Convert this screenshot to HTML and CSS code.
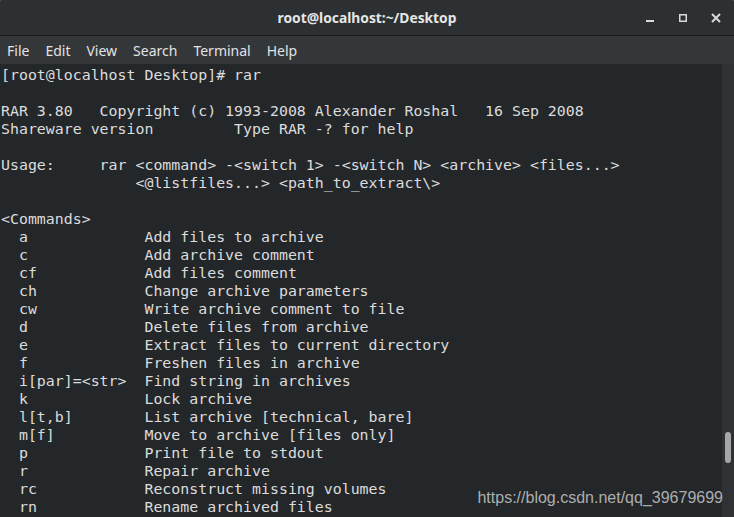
FILE: index.html
```html
<!DOCTYPE html>
<html lang="en">
<head>
    <meta charset="UTF-8">
    <meta name="viewport" content="width=device-width, initial-scale=1.0">
    <title>root@localhost:~/Desktop</title>
    <link rel="stylesheet" href="styles.css">
</head>
<body>
    <div class="window">
        <div class="title-bar">
            <div></div>
            <div class="title">root@localhost:~/Desktop</div>
            <div class="controls">
                <svg class="ctl" width="12" height="12" viewBox="0 0 12 12"><rect x="2" y="8" width="8" height="2" fill="#dadada"/></svg>
                <svg class="ctl" width="12" height="12" viewBox="0 0 12 12"><rect x="2.75" y="2.75" width="6.5" height="6.5" fill="none" stroke="#dadada" stroke-width="1.5"/></svg>
                <svg class="ctl" width="12" height="12" viewBox="0 0 12 12"><path d="M2 2 L10 10 M10 2 L2 10" stroke="#dadada" stroke-width="2"/></svg>
            </div>
        </div>
        <div class="menu-bar">
            <span class="menu-item">File</span>
            <span class="menu-item">Edit</span>
            <span class="menu-item">View</span>
            <span class="menu-item">Search</span>
            <span class="menu-item">Terminal</span>
            <span class="menu-item">Help</span>
        </div>
        <div class="terminal">
<pre class="output">[root@localhost Desktop]# rar

RAR 3.80   Copyright (c) 1993-2008 Alexander Roshal   16 Sep 2008
Shareware version         Type RAR -? for help

Usage:     rar &lt;command&gt; -&lt;switch 1&gt; -&lt;switch N&gt; &lt;archive&gt; &lt;files...&gt;
               &lt;@listfiles...&gt; &lt;path_to_extract\&gt;

&lt;Commands&gt;
  a             Add files to archive
  c             Add archive comment
  cf            Add files comment
  ch            Change archive parameters
  cw            Write archive comment to file
  d             Delete files from archive
  e             Extract files to current directory
  f             Freshen files in archive
  i[par]=&lt;str&gt;  Find string in archives
  k             Lock archive
  l[t,b]        List archive [technical, bare]
  m[f]          Move to archive [files only]
  p             Print file to stdout
  r             Repair archive
  rc            Reconstruct missing volumes
  rn            Rename archived files</pre>
            <div class="scrollbar">
                <div class="thumb"></div>
            </div>
        </div>
        <div class="watermark">https://blog.csdn.net/qq_39679699</div>
    </div>
</body>
</html>
```

FILE: styles.css
```css
body, html {
    margin: 0;
    padding: 0;
    height: 100%;
    overflow: hidden;
    background: #4a4d50;
}

.window {
    position: relative;
    display: flex;
    flex-direction: column;
    height: 517px;
    border-radius: 4px 4px 0 0;
    overflow: hidden;
    background: #24272a;
}

.title-bar {
    display: grid;
    grid-template-columns: 1fr auto 1fr;
    align-items: center;
    height: 35px;
    background: #2d3033;
    border-bottom: 1px solid #15171a;
}

.title {
    font-family: "Noto Sans", sans-serif;
    font-weight: bold;
    font-size: 13.8px;
    color: #e6e6e6;
}

.controls {
    display: flex;
    justify-content: flex-end;
    gap: 21px;
    padding-right: 12px;
}

.ctl {
    display: block;
}

.menu-bar {
    display: flex;
    align-items: center;
    height: 28px;
    padding-left: 7px;
    gap: 16px;
    background: #33373a;
    font-family: "Noto Sans", sans-serif;
    font-size: 14px;
    color: #e2e2e2;
}

.terminal {
    flex: 1;
    display: flex;
    min-height: 0;
}

.output {
    flex: 1;
    margin: 0;
    padding: 2px 0 0 1px;
    font-family: "DejaVu Sans Mono", monospace;
    font-size: 14.9px;
    line-height: 18px;
    color: #dcdcdc;
    overflow: hidden;
}

.scrollbar {
    width: 12px;
    background: #2e3235;
}

.thumb {
    width: 6px;
    height: 31px;
    margin: 368px 0 0 3px;
    border-radius: 3px;
    background: #a5a7a8;
}

.watermark {
    position: absolute;
    right: 11px;
    bottom: 10px;
    font-family: "Liberation Sans", Arial, sans-serif;
    font-size: 16px;
    color: rgba(210, 210, 210, 0.8);
}
```
